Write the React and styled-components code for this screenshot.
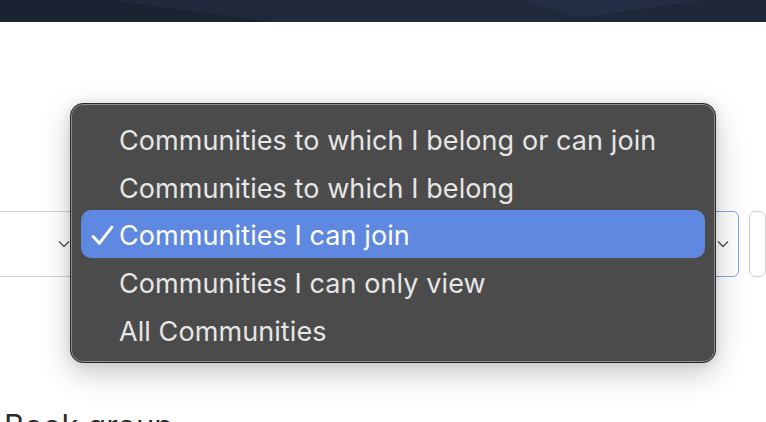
import React from "react";
import styled, { createGlobalStyle } from "styled-components";

const GlobalStyle = createGlobalStyle`
  html, body {
    margin: 0;
    padding: 0;
    background: #ffffff;
    overflow: hidden;
  }
  body {
    font-family: Inter, "Liberation Sans", sans-serif;
  }
`;

const Page = styled.div`
  position: relative;
  width: 766px;
  height: 422px;
  overflow: hidden;
  background: #ffffff;
`;

const Banner = styled.div`
  height: 22px;
  background: #1f293b;
  overflow: hidden;
`;

const Content = styled.div`
  display: flex;
  flex-direction: column;
  padding-top: 189px;
`;

const SelectRow = styled.div`
  display: flex;
  gap: 10px;
  height: 66px;
`;

const Select = styled.div`
  box-sizing: border-box;
  flex: ${(p) => (p.$grow ? "1 1 auto" : "0 0 auto")};
  width: ${(p) => p.$width || "auto"};
  height: 66px;
  border: 1px solid ${(p) => (p.$focused ? "#7aa7e6" : "#d0d0d0")};
  border-left: ${(p) => (p.$cut ? "none" : undefined)};
  border-radius: ${(p) => (p.$cut ? "0 6px 6px 0" : "6px")};
  background: #ffffff;
  display: flex;
  align-items: center;
  justify-content: flex-end;
  padding-right: 9px;
`;

const Chevron = styled.svg`
  width: 12px;
  height: 8px;
  display: block;
`;

const Heading = styled.div`
  margin-top: 131px;
  padding-left: 4px;
  font-size: 31px;
  line-height: 36px;
  color: #2b2b2b;
  white-space: nowrap;
`;

const Menu = styled.ul`
  position: absolute;
  left: 70px;
  top: 103px;
  width: 646px;
  height: 260px;
  box-sizing: border-box;
  margin: 0;
  padding: 11px 10px 9px;
  list-style: none;
  background: #4b4b4b;
  border-radius: 13px;
  border: 1px solid #2a2a2a;
  box-shadow: inset 0 0 0 1px #8e8e8e, 0 10px 30px rgba(0, 0, 0, 0.22),
    0 0 8px rgba(0, 0, 0, 0.1);
  display: flex;
  flex-direction: column;
`;

const Item = styled.li`
  position: relative;
  box-sizing: border-box;
  height: 48px;
  display: flex;
  align-items: center;
  padding-left: 38px;
  padding-top: 4px;
  border-radius: 10px;
  background: ${(p) => (p.$selected ? "#5f88e1" : "transparent")};
  color: ${(p) => (p.$selected ? "#ffffff" : "#e6e6e6")};
  font-size: 27px;
  letter-spacing: 0.08px;
  white-space: nowrap;
`;

const Check = styled.svg`
  position: absolute;
  left: 10px;
  top: 15px;
  width: 23px;
  height: 21px;
`;

const items = [
  "Communities to which I belong or can join",
  "Communities to which I belong",
  "Communities I can join",
  "Communities I can only view",
  "All Communities",
];

const ChevronIcon = () => (
  <Chevron viewBox="0 0 12 8">
    <path d="M1 1.5 L6 6.5 L11 1.5" fill="none" stroke="#555" strokeWidth="1.4" />
  </Chevron>
);

export default function App() {
  return (
    <Page>
      <GlobalStyle />
      <Banner>
        <svg width="766" height="22" viewBox="0 0 766 22">
          <polygon points="0,0 110,0 270,22 0,22" fill="#1b2231" />
          <polygon points="520,0 700,0 580,18" fill="#232d44" />
          <polygon points="560,22 580,18 720,0 766,0 766,22" fill="#1f283a" />
        </svg>
      </Banner>
      <Content>
        <SelectRow>
          <Select $width="80px" $cut>
            <ChevronIcon />
          </Select>
          <Select $grow $focused>
            <ChevronIcon />
          </Select>
          <Select $width="17px" />
        </SelectRow>
        <Heading>Book group</Heading>
      </Content>
      <Menu>
        {items.map((label) => (
          <Item key={label} $selected={label === "Communities I can join"}>
            {label === "Communities I can join" && (
              <Check viewBox="0 0 22 20">
                <path
                  d="M2 11 L8 17.5 L20 2"
                  fill="none"
                  stroke="#ffffff"
                  strokeWidth="2.8"
                  strokeLinecap="round"
                  strokeLinejoin="round"
                />
              </Check>
            )}
            {label}
          </Item>
        ))}
      </Menu>
    </Page>
  );
}
